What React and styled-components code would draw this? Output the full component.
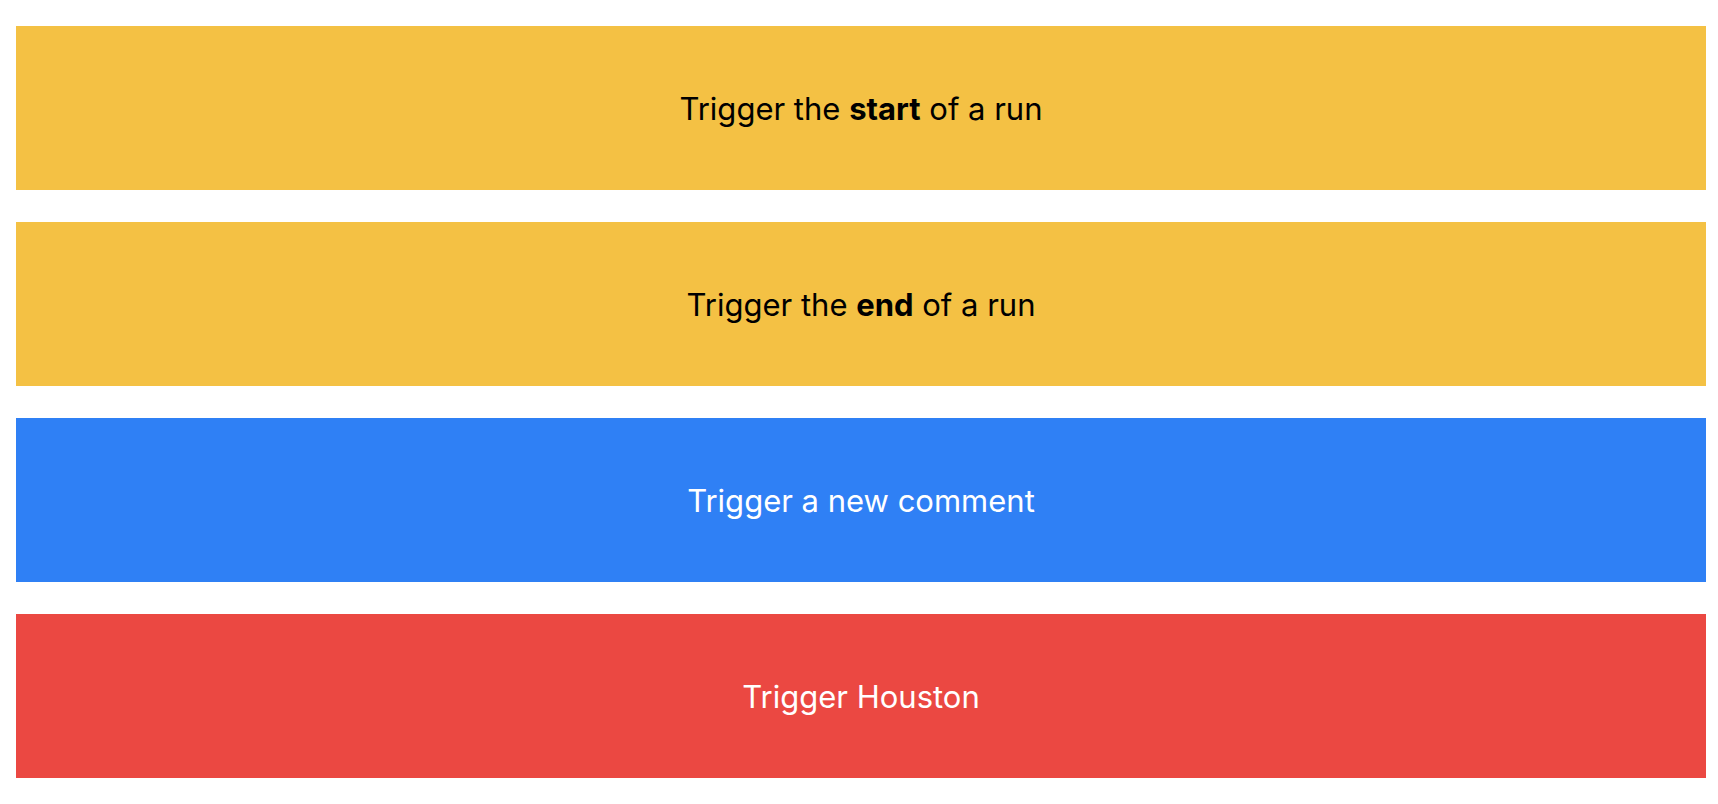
import React from 'react';
import styled, { createGlobalStyle } from 'styled-components';

const GlobalStyle = createGlobalStyle`
	body {
		margin: 0;
		background: #fff;
		font-family: Inter, 'Noto Sans', sans-serif;
	}
`;

const palette = {
	warning: { bg: '#f4c144', fg: '#000' },
	info: { bg: '#2f80f5', fg: '#fff' },
	danger: { bg: '#eb4842', fg: '#fff' },
};

function App() {
	return (
		<Page>
			<GlobalStyle />
			<TriggerButton $kind='warning'>
				Trigger the <b>start</b> of a run
			</TriggerButton>
			<TriggerButton $kind='warning'>
				Trigger the <b>end</b> of a run
			</TriggerButton>
			<TriggerButton $kind='info'>Trigger a new comment</TriggerButton>
			<TriggerButton $kind='danger'>Trigger Houston</TriggerButton>
		</Page>
	);
}

const Page = styled.main`
	display: flex;
	flex-direction: column;
	gap: 32px;
	padding: 26px 12px 0 16px;
`;

const TriggerButton = styled.button`
	height: 164px;
	border: none;
	border-radius: 0;
	background: ${(p) => palette[p.$kind].bg};
	color: ${(p) => palette[p.$kind].fg};
	font-family: Inter, 'Noto Sans', sans-serif;
	font-size: 31px;
	cursor: pointer;

	b {
		font-weight: 700;
	}
`;

export default App;
